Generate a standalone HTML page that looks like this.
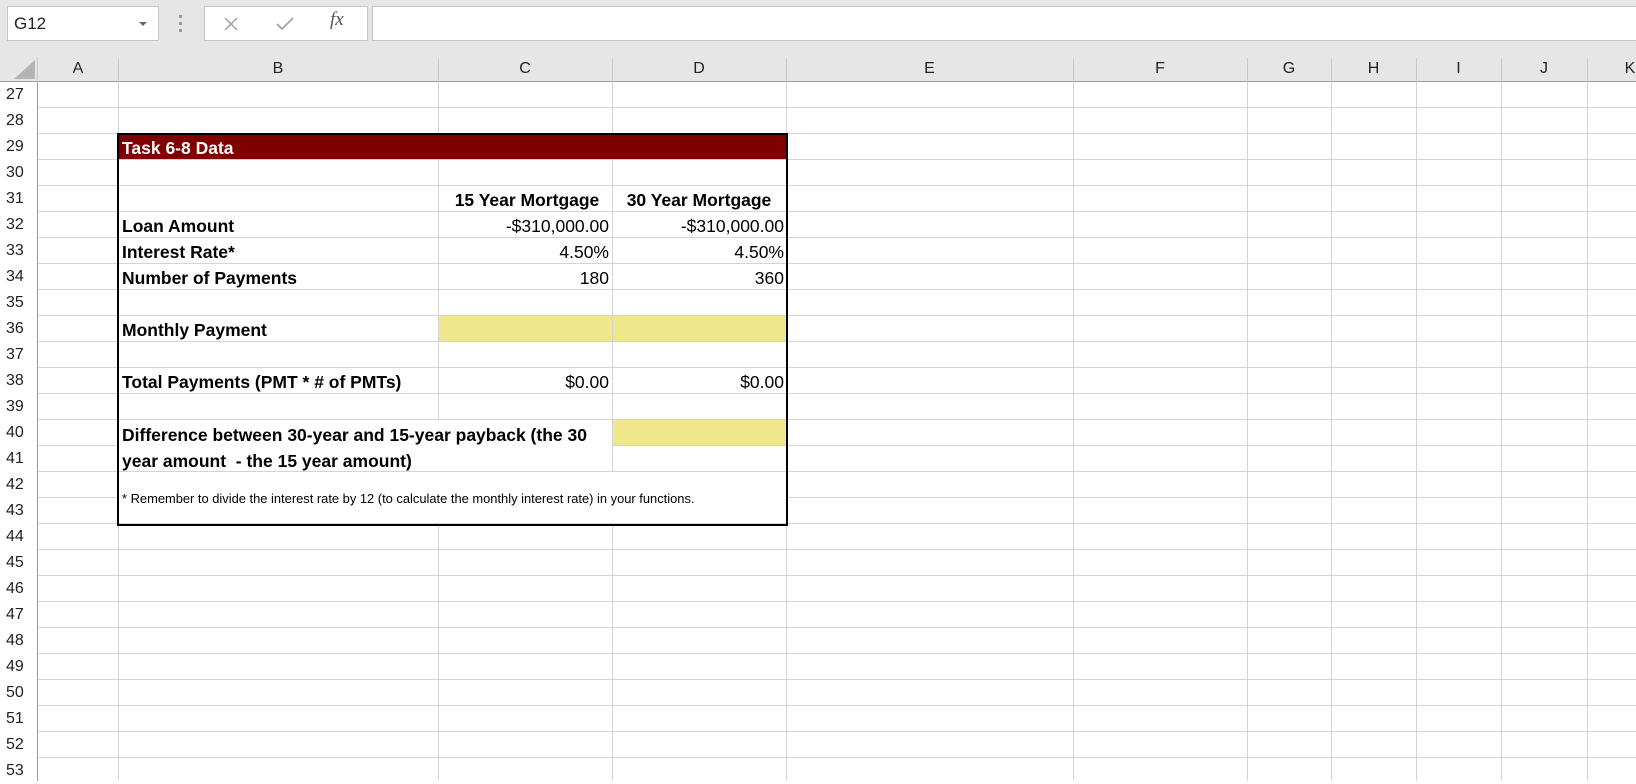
<!DOCTYPE html>
<html><head><meta charset="utf-8"><style>
*{margin:0;padding:0;box-sizing:border-box}
body{width:1636px;height:781px;overflow:hidden;background:#fff;font-family:"Liberation Sans",sans-serif;position:relative}
.a{position:absolute}
#top{left:0;top:0;width:1636px;height:82px;background:#e6e6e6}
.grid{left:38px;top:82px;width:1598px;height:699px;
background-image:
linear-gradient(to bottom,transparent 25px,#d4d4d4 25px);
background-size:100% 26px}
.v{position:absolute;top:82px;height:699px;width:1px;background:#d4d4d4}
.ch{position:absolute;top:56px;height:26px;font-size:16px;color:#222;text-align:center;line-height:26px}
.chl{position:absolute;top:58px;height:24px;width:1px;background:#c8c8c8}
.rn{position:absolute;left:6px;font-size:16px;color:#222;line-height:26px;height:26px}
.t{position:absolute;font-size:17.5px;line-height:26px;height:26px;color:#000;white-space:nowrap}
.b{font-weight:bold}
.r{text-align:right}
.c{text-align:center}
</style></head><body>
<div class="a" id="top"></div>
<div class="a" style="left:7px;top:6px;width:152px;height:35px;background:#fff;border:1px solid #c6c6c6"></div>
<div class="a" style="left:14px;top:6px;font-size:17px;line-height:35px;color:#222">G12</div>
<div class="a" style="left:139px;top:22px;width:0;height:0;border-left:4px solid transparent;border-right:4px solid transparent;border-top:4px solid #666"></div>
<div class="a" style="left:179px;top:15px;width:3px;height:3px;background:#999"></div>
<div class="a" style="left:179px;top:22px;width:3px;height:3px;background:#999"></div>
<div class="a" style="left:179px;top:29px;width:3px;height:3px;background:#999"></div>
<div class="a" style="left:204px;top:6px;width:164px;height:35px;background:#fff;border:1px solid #c6c6c6"></div>
<svg class="a" style="left:222px;top:15px" width="18" height="18"><path d="M3 3L15 15M15 3L3 15" stroke="#aaa" stroke-width="1.6"/></svg>
<svg class="a" style="left:275px;top:15px" width="20" height="18"><path d="M2 9L7 14L18 3" stroke="#aaa" stroke-width="2" fill="none"/></svg>
<div class="a" style="left:330px;top:9px;font-family:'Liberation Serif',serif;font-style:italic;font-size:19px;color:#555">fx</div>
<div class="a" style="left:372px;top:6px;width:1270px;height:35px;background:#fff;border:1px solid #c6c6c6"></div>
<svg class="a" style="left:14px;top:60px" width="22" height="20"><path d="M21 0L21 19L0 19Z" fill="#b4b4b4"/></svg>
<div class="a" style="left:0;top:81px;width:1636px;height:1px;background:#9b9b9b"></div>
<div class="a" style="left:37px;top:82px;width:1px;height:699px;background:#9b9b9b"></div>
<div class="a grid"></div>
<div class="v" style="left:118px"></div><div class="v" style="left:438px"></div><div class="v" style="left:612px"></div><div class="v" style="left:786px"></div><div class="v" style="left:1073px"></div><div class="v" style="left:1247px"></div><div class="v" style="left:1331px"></div><div class="v" style="left:1416px"></div><div class="v" style="left:1501px"></div><div class="v" style="left:1587px"></div>
<div class="chl" style="left:37px"></div><div class="chl" style="left:118px"></div><div class="chl" style="left:438px"></div><div class="chl" style="left:612px"></div><div class="chl" style="left:786px"></div><div class="chl" style="left:1073px"></div><div class="chl" style="left:1247px"></div><div class="chl" style="left:1331px"></div><div class="chl" style="left:1416px"></div><div class="chl" style="left:1501px"></div><div class="chl" style="left:1587px"></div>
<div class="ch" style="left:38px;width:80px">A</div>
<div class="ch" style="left:118px;width:320px">B</div>
<div class="ch" style="left:438px;width:174px">C</div>
<div class="ch" style="left:612px;width:174px">D</div>
<div class="ch" style="left:786px;width:287px">E</div>
<div class="ch" style="left:1073px;width:174px">F</div>
<div class="ch" style="left:1247px;width:84px">G</div>
<div class="ch" style="left:1331px;width:85px">H</div>
<div class="ch" style="left:1416px;width:85px">I</div>
<div class="ch" style="left:1501px;width:86px">J</div>
<div class="ch" style="left:1587px;width:86px">K</div>
<div class="rn" style="top:82px">27</div><div class="rn" style="top:108px">28</div><div class="rn" style="top:134px">29</div><div class="rn" style="top:160px">30</div><div class="rn" style="top:186px">31</div><div class="rn" style="top:212px">32</div><div class="rn" style="top:238px">33</div><div class="rn" style="top:264px">34</div><div class="rn" style="top:290px">35</div><div class="rn" style="top:316px">36</div><div class="rn" style="top:342px">37</div><div class="rn" style="top:368px">38</div><div class="rn" style="top:394px">39</div><div class="rn" style="top:420px">40</div><div class="rn" style="top:446px">41</div><div class="rn" style="top:472px">42</div><div class="rn" style="top:498px">43</div><div class="rn" style="top:524px">44</div><div class="rn" style="top:550px">45</div><div class="rn" style="top:576px">46</div><div class="rn" style="top:602px">47</div><div class="rn" style="top:628px">48</div><div class="rn" style="top:654px">49</div><div class="rn" style="top:680px">50</div><div class="rn" style="top:706px">51</div><div class="rn" style="top:732px">52</div><div class="rn" style="top:758px">53</div>
<div class="a" style="left:119px;top:420px;width:493px;height:51px;background:#fff"></div>
<div class="a" style="left:119px;top:472px;width:667px;height:51px;background:#fff"></div>
<div class="a" style="left:118px;top:134px;width:668px;height:25px;background:#800000"></div>
<div class="a" style="left:439px;top:316px;width:173px;height:25px;background:#f0e68c"></div>
<div class="a" style="left:613px;top:316px;width:173px;height:25px;background:#f0e68c"></div>
<div class="a" style="left:613px;top:420px;width:173px;height:25px;background:#f0e68c"></div>
<div class="a" style="left:117px;top:133px;width:671px;height:393px;border:2px solid #000"></div>
<div class="t b" style="left:122px;top:135px;color:#fff">Task 6-8 Data</div>
<div class="t b c" style="left:438px;top:187px;width:178px">15 Year Mortgage</div>
<div class="t b c" style="left:612px;top:187px;width:174px">30 Year Mortgage</div>
<div class="t b" style="left:122px;top:213px">Loan Amount</div>
<div class="t b" style="left:122px;top:239px">Interest Rate*</div>
<div class="t b" style="left:122px;top:265px">Number of Payments</div>
<div class="t r" style="left:438px;top:213px;width:171px">-$310,000.00</div>
<div class="t r" style="left:612px;top:213px;width:172px">-$310,000.00</div>
<div class="t r" style="left:438px;top:239px;width:171px">4.50%</div>
<div class="t r" style="left:612px;top:239px;width:172px">4.50%</div>
<div class="t r" style="left:438px;top:265px;width:171px">180</div>
<div class="t r" style="left:612px;top:265px;width:172px">360</div>
<div class="t b" style="left:122px;top:317px">Monthly Payment</div>
<div class="t b" style="left:122px;top:369px">Total Payments (PMT * # of PMTs)</div>
<div class="t r" style="left:438px;top:369px;width:171px">$0.00</div>
<div class="t r" style="left:612px;top:369px;width:172px">$0.00</div>
<div class="t b" style="left:122px;top:422px">Difference between 30-year and 15-year payback (the 30</div>
<div class="t b" style="left:122px;top:448px">year amount &nbsp;- the 15 year amount)</div>
<div class="t" style="left:122px;top:486px;font-size:12.9px">* Remember to divide the interest rate by 12 (to calculate the monthly interest rate) in your functions.</div>
</body></html>
